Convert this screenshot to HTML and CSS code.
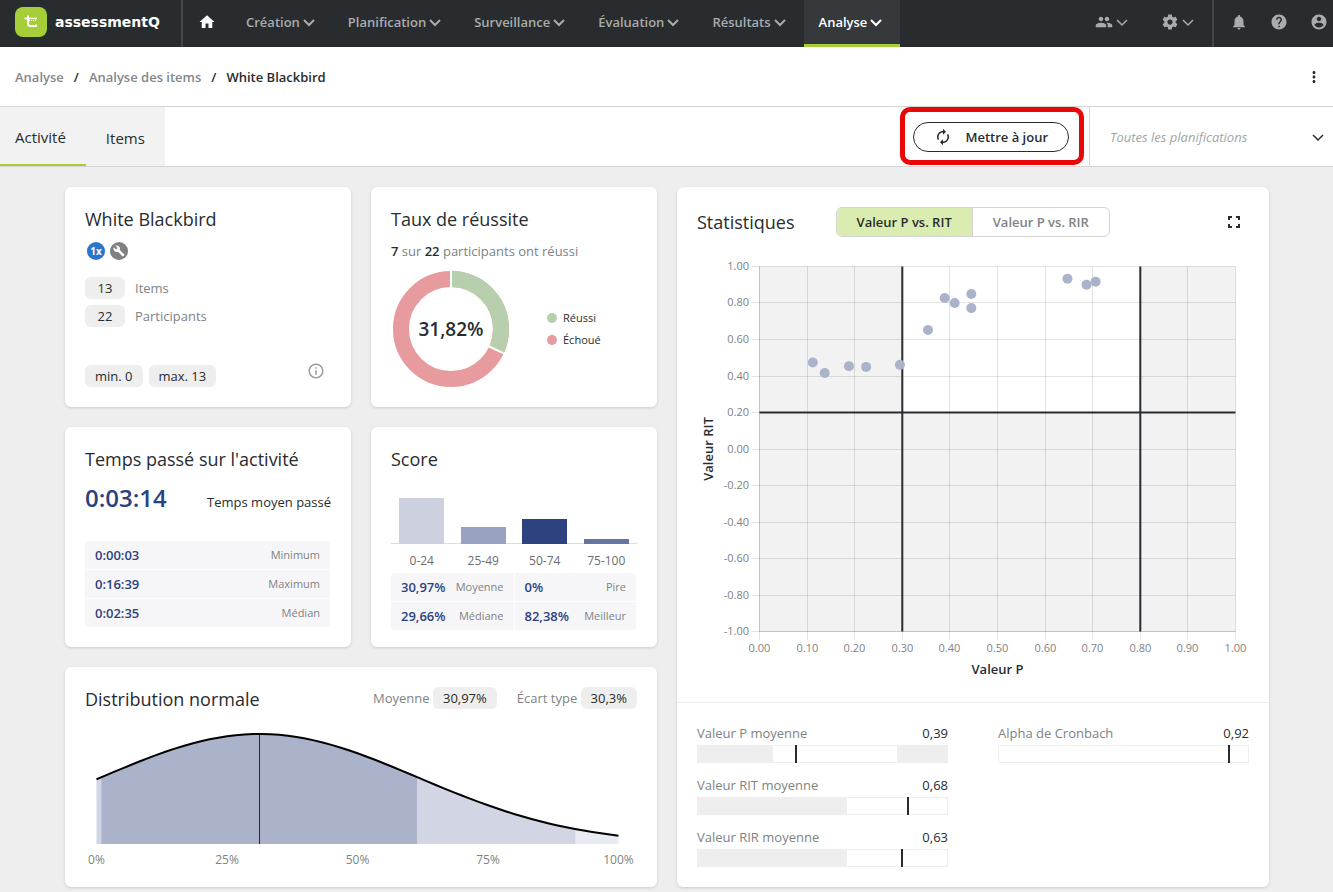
FILE: index.html
```html
<!DOCTYPE html>
<html lang="fr">
<head>
  <meta charset="UTF-8">
  <meta name="viewport" content="width=device-width, initial-scale=1">
  <title>White Blackbird - Analyse des items</title>
  <link rel="stylesheet" href="styles.css">
</head>
<body>

<svg class="sprite" aria-hidden="true">
  <symbol id="chevron" viewBox="0 0 18 18"><path d="M4 7l5 5 5-5" fill="none" stroke="currentColor"/></symbol>
</svg>

<header class="topbar">
  <a class="brand" href="#">
    <svg class="brand-logo" viewBox="0 0 32 30">
      <rect width="32" height="30" rx="8" fill="#a6ce39"/>
      <path d="M13 8.500v8q0 2.500 2.500 2.500h5.500v-1.500" fill="none" stroke="#fff" stroke-width="2"/>
      <path d="M9.500 11.500h3.500M14 11.500h8" fill="none" stroke="#fff" stroke-width="1.500"/>
      <path d="M14 13.500h7" fill="none" stroke="#fff" stroke-dasharray="1 1"/>
    </svg>
    <span>assessmentQ</span>
  </a>
  <nav class="menu">
    <a class="menu-item home" href="#" aria-label="Accueil"><svg class="icon" viewBox="0 0 24 24"><path d="M10 20v-6h4v6h5v-8h3L12 3 2 12h3v8z"/></svg></a>
    <a class="menu-item" href="#">Création<svg class="icon chevron"><use href="#chevron"/></svg></a>
    <a class="menu-item" href="#">Planification<svg class="icon chevron"><use href="#chevron"/></svg></a>
    <a class="menu-item" href="#">Surveillance<svg class="icon chevron"><use href="#chevron"/></svg></a>
    <a class="menu-item" href="#">Évaluation<svg class="icon chevron"><use href="#chevron"/></svg></a>
    <a class="menu-item" href="#">Résultats<svg class="icon chevron"><use href="#chevron"/></svg></a>
    <a class="menu-item active" href="#">Analyse<svg class="icon chevron"><use href="#chevron"/></svg></a>
  </nav>
  <div class="menu menu-right">
    <button class="menu-item" aria-label="Utilisateurs"><svg class="icon" viewBox="0 0 24 24"><path d="M16 11c1.660 0 2.990-1.340 2.990-3S17.660 5 16 5c-1.660 0-3 1.340-3 3s1.340 3 3 3zm-8 0c1.660 0 2.990-1.340 2.990-3S9.660 5 8 5C6.340 5 5 6.340 5 8s1.340 3 3 3zm0 2c-2.330 0-7 1.170-7 3.500V19h14v-2.500c0-2.330-4.670-3.500-7-3.500zm8 0c-.29 0-.62.02-.97.05 1.160.84 1.970 1.970 1.970 3.450V19h6v-2.500c0-2.330-4.670-3.500-7-3.500z"/></svg><svg class="icon chevron thin"><use href="#chevron"/></svg></button>
    <button class="menu-item" aria-label="Paramètres"><svg class="icon" viewBox="0 0 24 24"><path d="M19.430 12.980c.04-.32.07-.64.07-.98s-.03-.66-.07-.98l2.110-1.650c.19-.15.24-.42.12-.64l-2-3.460c-.12-.22-.39-.3-.61-.22l-2.490 1c-.52-.4-1.080-.73-1.690-.98l-.38-2.650C14.460 2.180 14.250 2 14 2h-4c-.25 0-.46.18-.49.42l-.38 2.650c-.61.25-1.170.59-1.690.98l-2.490-1c-.23-.09-.49 0-.61.22l-2 3.460c-.13.22-.07.49.12.64l2.110 1.650c-.04.32-.07.65-.07.98s.03.66.07.98l-2.110 1.650c-.19.15-.24.42-.12.64l2 3.460c.12.22.39.3.61.22l2.490-1c.52.4 1.080.73 1.690.98l.38 2.650c.03.24.24.42.49.42h4c.25 0 .46-.18.49-.42l.38-2.650c.61-.25 1.170-.59 1.690-.98l2.490 1c.23.09.49 0 .61-.22l2-3.460c.12-.22.07-.49-.12-.64l-2.110-1.650zM12 15.500c-1.930 0-3.500-1.570-3.500-3.500s1.570-3.500 3.500-3.500 3.500 1.570 3.500 3.500-1.570 3.500-3.500 3.500z"/></svg><svg class="icon chevron thin"><use href="#chevron"/></svg></button>
  </div>
  <div class="account">
    <button aria-label="Notifications"><svg class="icon" viewBox="0 0 24 24"><path d="M12 22c1.100 0 2-.9 2-2h-4c0 1.100.89 2 2 2zm6-6v-5c0-3.070-1.640-5.640-4.500-6.320V4c0-.83-.67-1.500-1.500-1.500s-1.500.67-1.500 1.500v.68C7.630 5.360 6 7.920 6 11v5l-2 2v1h16v-1l-2-2z"/></svg></button>
    <button aria-label="Aide"><svg class="icon" viewBox="0 0 24 24"><path d="M12 2C6.480 2 2 6.480 2 12s4.480 10 10 10 10-4.480 10-10S17.520 2 12 2zm1 17h-2v-2h2v2zm2.070-7.750l-.9.92C13.450 12.900 13 13.500 13 15h-2v-.5c0-1.100.45-2.100 1.170-2.830l1.240-1.260c.37-.36.59-.86.59-1.410 0-1.100-.9-2-2-2s-2 .9-2 2H8c0-2.210 1.790-4 4-4s4 1.790 4 4c0 .88-.36 1.680-.93 2.250z"/></svg></button>
    <button aria-label="Compte"><svg class="icon" viewBox="0 0 24 24"><path d="M12 2C6.480 2 2 6.480 2 12s4.480 10 10 10 10-4.480 10-10S17.520 2 12 2zm0 3c1.660 0 3 1.340 3 3s-1.340 3-3 3-3-1.340-3-3 1.340-3 3-3zm0 14.200c-2.500 0-4.710-1.280-6-3.220.03-1.990 4-3.080 6-3.080 1.990 0 5.970 1.090 6 3.080-1.290 1.940-3.500 3.220-6 3.220z"/></svg></button>
  </div>
</header>

<div class="breadcrumb">
  <a href="#">Analyse</a><span>/</span><a href="#">Analyse des items</a><span>/</span><strong>White Blackbird</strong>
  <button class="more" aria-label="Plus"><svg class="icon" viewBox="0 0 24 24"><path d="M12 8c1.100 0 2-.9 2-2s-.9-2-2-2-2 .9-2 2 .9 2 2 2zm0 2c-1.100 0-2 .9-2 2s.9 2 2 2 2-.9 2-2-.9-2-2-2zm0 6c-1.100 0-2 .9-2 2s.9 2 2 2 2-.9 2-2-.9-2-2-2z"/></svg></button>
</div>

<div class="toolbar">
  <nav class="tabs">
    <a class="tab current" href="#">Activité</a>
    <a class="tab" href="#">Items</a>
  </nav>
  <div class="highlight">
    <button class="refresh"><svg class="icon" viewBox="0 0 24 24"><path d="M12 6v3l4-4-4-4v3c-4.420 0-8 3.580-8 8 0 1.570.46 3.030 1.240 4.260L6.700 14.800c-.45-.83-.7-1.790-.7-2.800 0-3.310 2.690-6 6-6zm6.760 1.740L17.300 9.200c.44.84.7 1.790.7 2.800 0 3.310-2.690 6-6 6v-3l-4 4 4 4v-3c4.420 0 8-3.580 8-8 0-1.570-.46-3.030-1.240-4.260z"/></svg>Mettre à jour</button>
  </div>
  <label class="planning">
    <select aria-label="Planifications"><option>Toutes les planifications</option></select>
    <svg class="icon chevron thin"><use href="#chevron"/></svg>
  </label>
</div>

<main class="dashboard">
  <section class="card">
    <h2>White Blackbird</h2>
    <div class="badges">
      <span class="badge blue">1x</span>
      <span class="badge grey"><svg viewBox="0 0 24 24"><path d="M22.700 19l-9.100-9.100c.9-2.300.4-5-1.500-6.900-2-2-5-2.400-7.400-1.300L9 6 6 9 1.600 4.700C.4 7.100.9 10.100 2.900 12.100c1.900 1.900 4.600 2.400 6.900 1.500l9.100 9.100c.4.4 1 .4 1.400 0l2.300-2.300c.5-.4.5-1.100.1-1.400z"/></svg></span>
    </div>
    <div class="counts">
      <span class="pill">13</span><span>Items</span>
      <span class="pill">22</span><span>Participants</span>
    </div>
    <div class="limits">
      <span class="pill">min. 0</span>
      <span class="pill">max. 13</span>
      <svg class="info" viewBox="0 0 24 24"><path d="M11 17h2v-6h-2v6zm1-15C6.480 2 2 6.480 2 12s4.480 10 10 10 10-4.480 10-10S17.520 2 12 2zm0 18c-4.410 0-8-3.590-8-8s3.590-8 8-8 8 3.590 8 8-3.590 8-8 8zM11 9h2V7h-2v2z"/></svg>
    </div>
  </section>

  <section class="card">
    <h2>Taux de réussite</h2>
    <p class="passed"><b>7</b> sur <b>22</b> participants ont réussi</p>
    <div class="rate">
      <svg class="donut" viewBox="2 2 116 116">
        <circle class="fail" cx="60" cy="60" r="50" pathLength="100"/>
        <circle class="pass" cx="60" cy="60" r="50" pathLength="100" stroke-dasharray="31.820 68.180" transform="rotate(-90 60 60)"/>
        <path class="cut" d="M60 0V20M96 76.500L116 85.800"/>
        <text x="60" y="67">31,82%</text>
      </svg>
      <ul class="legend">
        <li class="pass">Réussi</li>
        <li class="fail">Échoué</li>
      </ul>
    </div>
  </section>

  <section class="card stats">
    <div class="stats-main">
      <div class="stats-head">
        <h2>Statistiques</h2>
        <div class="switch">
          <button class="on">Valeur P vs. RIT</button><button>Valeur P vs. RIR</button>
        </div>
        <button class="expand" aria-label="Plein écran"><svg viewBox="0 0 12 12"><path d="M1 4V1h3M8 1h3v3M11 8v3H8M4 11H1V8" fill="none" stroke="currentColor" stroke-width="2"/></svg></button>
      </div>
      <svg class="scatter" id="scatter" viewBox="0 0 552 425"></svg>
    </div>
    <div class="metrics">
      <div class="metric">
        <div class="metric-label"><span>Valeur P moyenne</span><b>0,39</b></div>
        <div class="gauge"><i class="zone" style="width:30%"></i><i class="zone" style="width:20%"></i><i class="mark" style="left:39%"></i></div>
      </div>
      <div class="metric">
        <div class="metric-label"><span>Alpha de Cronbach</span><b>0,92</b></div>
        <div class="gauge"><i class="mark" style="left:92%"></i></div>
      </div>
      <div class="metric">
        <div class="metric-label"><span>Valeur RIT moyenne</span><b>0,68</b></div>
        <div class="gauge"><i class="zone" style="width:60%"></i><i class="mark" style="left:84%"></i></div>
      </div>
      <div class="metric next-row">
        <div class="metric-label"><span>Valeur RIR moyenne</span><b>0,63</b></div>
        <div class="gauge"><i class="zone" style="width:60%"></i><i class="mark" style="left:81.5%"></i></div>
      </div>
    </div>
  </section>

  <section class="card">
    <h2>Temps passé sur l'activité</h2>
    <div class="time">
      <strong>0:03:14</strong>
      <span>Temps moyen passé</span>
    </div>
    <table class="values times">
      <tr><th>0:00:03</th><td>Minimum</td></tr>
      <tr><th>0:16:39</th><td>Maximum</td></tr>
      <tr><th>0:02:35</th><td>Médian</td></tr>
    </table>
  </section>

  <section class="card score">
    <h2>Score</h2>
    <div class="bars">
      <i class="bar b1" style="height:46px"></i>
      <i class="bar b2" style="height:17px"></i>
      <i class="bar b3" style="height:25px"></i>
      <i class="bar b4" style="height:5px"></i>
    </div>
    <div class="bar-labels"><span>0-24</span><span>25-49</span><span>50-74</span><span>75-100</span></div>
    <table class="values scores">
      <tr><th>30,97%</th><td>Moyenne</td><th class="split">0%</th><td>Pire</td></tr>
      <tr><th>29,66%</th><td>Médiane</td><th class="split">82,38%</th><td>Meilleur</td></tr>
    </table>
  </section>

  <section class="card wide">
    <div class="dist-head">
      <h2>Distribution normale</h2>
      <span>Moyenne <span class="pill">30,97%</span></span>
      <span>Écart type <span class="pill">30,3%</span></span>
    </div>
    <svg class="curve" id="curve" viewBox="0 0 552 146"></svg>
  </section>
</main>

<script src="script.js"></script>
</body>
</html>
```
FILE: styles.css
```css
* { box-sizing: border-box; }
body {
  margin: 0;
  background: #eee;
  color: #282c2f;
  font-family: "Open Sans", "Noto Sans", sans-serif;
  font-size: 13px;
  line-height: 20px;
}
a { color: inherit; text-decoration: none; }
button {
  padding: 0;
  border: 0;
  background: none;
  color: inherit;
  font: inherit;
  cursor: pointer;
}
h2 {
  margin: 0;
  font-size: 18px;
  font-weight: 400;
  line-height: 24px;
}
.sprite { display: none; }
.icon {
  display: block;
  width: 18px;
  height: 18px;
  fill: currentColor;
}
.chevron { stroke-width: 2; }
.chevron.thin { stroke-width: 1.5; }

/* top bar */
.topbar {
  display: flex;
  height: 47px;
  background: #282c2f;
  color: #a9abac;
}
.brand {
  display: flex;
  align-items: center;
  gap: 8px;
  width: 183px;
  padding: 0 0 4px 15px;
  border-right: 2px solid #43474a;
  color: #fff;
  font-family: "DejaVu Sans", sans-serif;
  font-size: 14px;
  font-weight: 700;
}
.brand-logo { width: 32px; height: 30px; }
.menu { display: flex; }
.menu-item {
  display: flex;
  align-items: center;
  padding: 0 15px 3px;
  font-weight: 600;
}
.menu-item.home { color: #fff; }
.menu-item.active {
  padding-bottom: 1px;
  border-bottom: 3px solid #a6ce39;
  background: #35393c;
  color: #fff;
}
.menu-right { margin-left: auto; }
.account {
  display: flex;
  align-items: center;
  gap: 22px;
  padding: 0 5px 4px 16px;
  border-left: 2px solid #43474a;
}

/* breadcrumb */
.breadcrumb {
  display: flex;
  align-items: center;
  gap: 10px;
  height: 60px;
  padding: 0 10px 0 15px;
  border-bottom: 1px solid #d4d4d4;
  background: #fff;
  font-weight: 600;
}
.breadcrumb a { color: #858789; }
.breadcrumb strong { font-weight: 600; }
.more { margin-left: auto; }

/* tabs + filter */
.toolbar {
  display: flex;
  height: 60px;
  border-bottom: 1px solid #d4d4d4;
  background: #fff;
}
.tabs {
  display: flex;
  margin-right: auto;
  background: #f2f2f2;
  font-size: 15px;
}
.tab {
  display: flex;
  align-items: center;
  padding: 2px 20px 0;
}
.tab.current {
  padding: 2px 20px 0 15px;
  border-bottom: 2px solid #a6ce39;
}
.highlight {
  height: 58px;
  margin-right: 5px;
  padding: 10px 10px 8px 8px;
  border: 5px solid #e90707;
  border-radius: 10px;
}
.refresh {
  display: flex;
  align-items: center;
  gap: 13px;
  height: 30px;
  padding: 0 20px;
  border: 1px solid #282c2f;
  border-radius: 15px;
  font-weight: 600;
}
.planning {
  display: grid;
  grid-template-columns: 1fr 24px;
  align-items: center;
  width: 244px;
  border-left: 1px solid #d4d4d4;
}
.planning select {
  grid-area: 1 / 1 / 2 / 3;
  height: 100%;
  padding: 0 20px;
  border: 0;
  background: none;
  color: #a3a5a6;
  font: inherit;
  font-style: italic;
  appearance: none;
}
.planning .icon {
  grid-area: 1 / 2;
  pointer-events: none;
}

/* cards */
.dashboard {
  display: grid;
  grid-template-columns: repeat(4, minmax(0, 1fr));
  grid-auto-rows: minmax(220px, auto);
  gap: 20px;
  max-width: 1205px;
  margin: 0 auto;
  padding: 20px 0 5px 1px;
}
.card {
  display: flex;
  flex-direction: column;
  padding: 20px;
  border-radius: 6px;
  background: #fff;
  box-shadow: 0 1px 3px rgba(0,0,0,0.15);
}
.card.wide { grid-column: span 2; }
.pill {
  display: inline-block;
  padding: 0 10px;
  border-radius: 6px;
  background: #eee;
  color: #282c2f;
  line-height: 22px;
  text-align: center;
}
.badges {
  display: flex;
  gap: 5px;
  padding: 11px 2px 17px;
}
.badge {
  display: grid;
  place-items: center;
  width: 18px;
  height: 18px;
  border-radius: 50%;
  color: #fff;
  font-size: 10px;
  font-weight: 700;
  line-height: 18px;
}
.badge.blue { background: #2c75cc; }
.badge.grey { background: #808080; }
.badge svg { width: 12px; height: 12px; fill: #fff; }
.counts {
  display: grid;
  grid-template-columns: 40px 1fr;
  gap: 6px 10px;
  color: #808284;
  line-height: 22px;
}
.limits {
  display: flex;
  gap: 6px;
  margin-top: auto;
}
.info {
  width: 18px;
  height: 18px;
  margin: -3px 6px 0 auto;
  fill: #999b9c;
}

/* pass rate */
.passed { margin: 10px 0; color: #808284; }
.passed b { color: #282c2f; font-weight: 600; }
.rate {
  display: flex;
  align-items: center;
  gap: 38px;
  padding-left: 2px;
}
.donut { width: 116px; height: 116px; }
.donut circle { fill: none; stroke-width: 16; }
.donut .pass { stroke: #b7cfac; }
.donut .fail { stroke: #e79b9f; }
.donut .cut { stroke: #fff; stroke-width: 2; }
.donut text {
  fill: #282c2f;
  font-size: 19px;
  font-weight: 600;
  text-anchor: middle;
}
.legend {
  margin: 0;
  padding: 0;
  list-style: none;
  font-size: 11px;
  line-height: 22px;
}
.legend li { display: flex; align-items: center; gap: 6px; }
.legend li::before {
  content: "";
  width: 10px;
  height: 10px;
  border-radius: 50%;
  background: #b7cfac;
}
.legend .fail::before { background: #e79b9f; }

/* time and score */
.time {
  display: flex;
  justify-content: space-between;
  align-items: baseline;
  padding-top: 10px;
}
.time strong {
  color: #2d417f;
  font-size: 24px;
  font-weight: 600;
  line-height: 34px;
}
.values {
  width: calc(100% - 1px);
  border-spacing: 0;
  border-radius: 4px;
  overflow: hidden;
}
.values th, .values td { height: 28px; background: #f6f6f8; }
.values tr + tr > * { height: 29px; border-top: 1px solid #fff; }
.values th {
  padding: 0 0 0 10px;
  color: #2d417f;
  font-weight: 600;
  text-align: left;
}
.values td {
  padding: 0 10px 0 0;
  color: #808284;
  font-size: 11px;
  text-align: right;
}
.values .split { border-left: 1px solid #fff; }
.times { margin-top: auto; }
.score { padding-bottom: 17px; }
.scores { margin-top: 2px; table-layout: fixed; }
.bars {
  display: flex;
  justify-content: space-around;
  align-items: flex-end;
  height: 73px;
  border-bottom: 1px solid #ddd;
}
.bar { width: 45px; margin-bottom: -1px; }
.b1 { background: #ccd0df; }
.b2 { background: #99a2c0; }
.b3 { background: #2d427e; }
.b4 { background: #6674a1; }
.bar-labels {
  display: grid;
  grid-template-columns: repeat(4, 1fr);
  padding-top: 7px;
  color: #6a6d6f;
  font-size: 12px;
  text-align: center;
}

/* statistics */
.stats { grid-column: span 2; grid-row: span 3; padding: 0; }
.stats-main { padding: 20px; border-bottom: 1px solid #eee; }
.stats-head { display: flex; align-items: center; }
.switch {
  display: flex;
  height: 30px;
  margin-left: 41px;
  border: 1px solid #d4d4d4;
  border-radius: 6px;
  overflow: hidden;
  color: #808284;
  font-weight: 600;
}
.switch button { padding: 0 20px; }
.switch .on {
  border-right: 1px solid #d4d4d4;
  background: #dbecb0;
  color: #282c2f;
}
.expand {
  width: 12px;
  height: 12px;
  margin: 0 9px 0 auto;
}
.expand svg { display: block; }
.scatter { display: block; width: 100%; margin-top: 20px; }
.scatter .zone { fill: #f2f2f2; }
.scatter .grid { stroke: rgba(0,0,0,0.11); }
.scatter .limit { stroke: #282c2f; stroke-width: 2; }
.scatter .dot { fill: #abb3cb; }
.scatter .tick { fill: #808284; font-size: 11px; }
.scatter .axis {
  fill: #282c2f;
  font-size: 13px;
  font-weight: 600;
  text-anchor: middle;
}
.middle { text-anchor: middle; }
.end { text-anchor: end; }
.metrics {
  display: grid;
  grid-template-columns: 1fr 1fr;
  gap: 12px 50px;
  padding: 20px;
}
.next-row { grid-column: 1; }
.metric-label {
  display: flex;
  justify-content: space-between;
  color: #808284;
}
.metric-label b { color: #282c2f; font-weight: 400; }
.gauge {
  position: relative;
  display: flex;
  justify-content: space-between;
  height: 18px;
  margin-top: 2px;
  border: 1px solid #eee;
}
.gauge .zone { background: #eee; }
.gauge .mark {
  position: absolute;
  top: -1px;
  bottom: -1px;
  width: 2px;
  background: #282c2f;
}

/* normal distribution */
.dist-head {
  display: flex;
  align-items: flex-start;
  gap: 20px;
  height: 34px;
  color: #808284;
  line-height: 22px;
}
.dist-head h2 { margin-right: auto; color: #282c2f; }
.curve { display: block; width: 100%; }
.curve .tail { fill: #e9ebf2; }
.curve .outer { fill: #d2d5e4; }
.curve .inner { fill: #abb3cb; }
.curve .line { fill: none; stroke: #000; stroke-width: 2; }
.curve .mean { stroke: #282c2f; }
.curve text { fill: #808284; font-size: 12px; }
```
FILE: script.js
```js
const SVG = 'http://www.w3.org/2000/svg';

function add(parent, tag, attrs, text) {
  const el = document.createElementNS(SVG, tag);
  for (let key in attrs) el.setAttribute(key, attrs[key]);
  if (text) el.textContent = text;
  parent.appendChild(el);
}

// P value / RIT of each item
const items = [
  [0.112, 0.474], [0.137, 0.416], [0.188, 0.454], [0.224, 0.45], [0.295, 0.461],
  [0.354, 0.652], [0.389, 0.827], [0.41, 0.8], [0.445, 0.849], [0.445, 0.772],
  [0.647, 0.933], [0.687, 0.9], [0.706, 0.917]
];

function drawScatter() {
  const svg = document.getElementById('scatter');
  const left = 62.5, right = 538.5, top = 9.5, bottom = 374.5;
  const x = v => left + v * (right - left);
  const y = v => top + (1 - v) / 2 * (bottom - top);

  add(svg, 'rect', { class: 'zone', x: left, y: top, width: x(0.3) - left, height: bottom - top });
  add(svg, 'rect', { class: 'zone', x: x(0.8), y: top, width: right - x(0.8), height: bottom - top });
  add(svg, 'rect', { class: 'zone', x: x(0.3), y: y(0.2), width: x(0.8) - x(0.3), height: bottom - y(0.2) });

  for (let i = 0; i <= 10; i++) {
    const gx = Math.floor(x(i / 10)) + 0.5;
    const gy = Math.floor(y(1 - i / 5)) + 0.5;
    add(svg, 'line', { class: 'grid', x1: gx, x2: gx, y1: top, y2: bottom + 8 });
    add(svg, 'line', { class: 'grid', x1: left - 8, x2: right, y1: gy, y2: gy });
    add(svg, 'text', { class: 'tick middle', x: gx, y: 395 }, (i / 10).toFixed(2));
    add(svg, 'text', { class: 'tick end', x: 52, y: gy + 3.5 }, ((5 - i) / 5).toFixed(2));
  }
  add(svg, 'line', { class: 'grid', x1: left, x2: left, y1: top, y2: bottom });
  add(svg, 'line', { class: 'grid', x1: left, x2: right, y1: bottom, y2: bottom });

  [0.3, 0.8].forEach(v => add(svg, 'line', { class: 'limit', x1: x(v), x2: x(v), y1: top, y2: bottom }));
  add(svg, 'line', { class: 'limit', x1: left, x2: right, y1: y(0.2), y2: y(0.2) });

  items.forEach(([p, rit]) => add(svg, 'circle', { class: 'dot', cx: x(p), cy: y(rit), r: 5 }));

  add(svg, 'text', { class: 'axis', x: (left + right) / 2, y: 417 }, 'Valeur P');
  add(svg, 'text', { class: 'axis', transform: 'translate(16 192) rotate(-90)' }, 'Valeur RIT');
}

function drawCurve() {
  const svg = document.getElementById('curve');
  const mean = 31.2, sd = 30.3, left = 11.5, right = 533.5, base = 123, height = 110;
  const x = v => left + v / 100 * (right - left);
  const y = v => base - height * Math.exp(-0.5 * ((v - mean) / sd) ** 2);
  const line = (from, to) => {
    const points = [];
    for (let i = 0; i <= 60; i++) {
      const v = from + (to - from) * i / 60;
      points.push(x(v).toFixed(2) + ' ' + y(v).toFixed(2));
    }
    return 'M' + points.join('L');
  };
  const area = (cls, from, to) => add(svg, 'path', {
    class: cls, d: line(from, to) + 'V' + base + 'H' + x(from) + 'Z'
  });

  area('outer', 0, mean - sd);
  area('inner', mean - sd, mean + sd);
  area('outer', mean + sd, mean + 2 * sd);
  area('tail', mean + 2 * sd, 100);
  add(svg, 'line', { class: 'mean', x1: 174.5, x2: 174.5, y1: y(mean), y2: base });
  add(svg, 'path', { class: 'line', d: line(0, 100) });
  [0, 25, 50, 75, 100].forEach(v => add(svg, 'text', { class: 'middle', x: x(v), y: 143 }, v + '%'));
}

drawScatter();
drawCurve();
```
